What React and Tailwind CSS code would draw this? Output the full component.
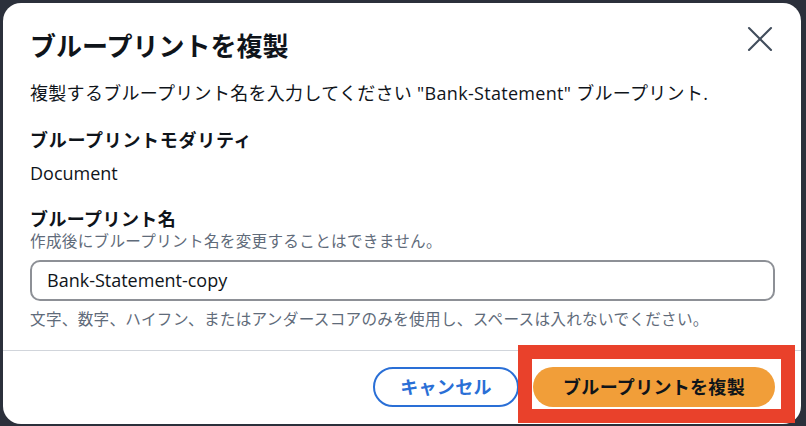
import { X } from "lucide-react";

export default function App() {
    return (
        <div
            className="w-[806px] h-[426px] bg-[#2b303b] pt-[3px] pl-[3px] overflow-hidden"
            style={{ fontFamily: '"Open Sans", "Noto Sans CJK JP", sans-serif' }}
        >
            <div className="relative w-[798px] h-[421px] bg-white rounded-[18px] flex flex-col text-[#0f141a]">
                {/* header */}
                <div className="flex items-start justify-between pl-[27px] pr-[19px] pt-[27px]">
                    <h2 className="text-[26px] leading-[32px] font-bold">ブループリントを複製</h2>
                    <button className="mt-[-7px] h-[32px] w-[44px] flex items-center justify-center text-[#414d5c]">
                        <X size={44} strokeWidth={1.15} className="shrink-0" />
                    </button>
                </div>

                {/* body */}
                <div className="flex flex-col pl-[27px] pr-[26px] mt-[18px]">
                    <p className="text-[18px] leading-[26px] tracking-[0.3px]">
                        複製するブループリント名を入力してください "Bank-Statement" ブループリント.
                    </p>

                    <div className="mt-[21px]">
                        <div className="text-[18px] leading-[26px] font-bold tracking-[0.7px]">ブループリントモダリティ</div>
                        <div className="text-[18px] leading-[26px] mt-[7px]">Document</div>
                    </div>

                    <div className="mt-[21px] flex flex-col">
                        <div className="text-[18px] leading-[24px] font-bold tracking-[0.4px]">ブループリント名</div>
                        <div className="text-[15.6px] leading-[20px] text-[#5f6b7a] tracking-[0.3px]">
                            作成後にブループリント名を変更することはできません。
                        </div>
                        <div className="mt-[9px] h-[41px] border-2 border-[#8d9096] rounded-[10px] flex items-center pl-[15px] text-[18px]">
                            Bank-Statement-copy
                        </div>
                        <div className="mt-[8px] text-[15.6px] leading-[20px] text-[#5f6b7a] tracking-[0.3px]">
                            文字、数字、ハイフン、またはアンダースコアのみを使用し、スペースは入れないでください。
                        </div>
                    </div>
                </div>

                {/* footer */}
                <div className="mt-[21px] border-t border-[#d1d5db]" />
                <div className="flex justify-end gap-[14px] pr-[26px] pt-[16px]">
                    <button className="w-[146px] h-[40px] rounded-full border-2 border-[#2a6fd6] text-[#2a6fd6] text-[18px] font-bold tracking-[0.3px]">
                        キャンセル
                    </button>
                    <button className="w-[242px] h-[40px] rounded-full bg-[#f19e39] text-[#0f141a] text-[18px] font-bold tracking-[0.3px]">
                        ブループリントを複製
                    </button>
                </div>

                {/* annotation */}
                <div className="absolute left-[515px] top-[342px] w-[277px] h-[78px] border-[14px] border-[#e9412b] pointer-events-none" />
            </div>
        </div>
    );
}
